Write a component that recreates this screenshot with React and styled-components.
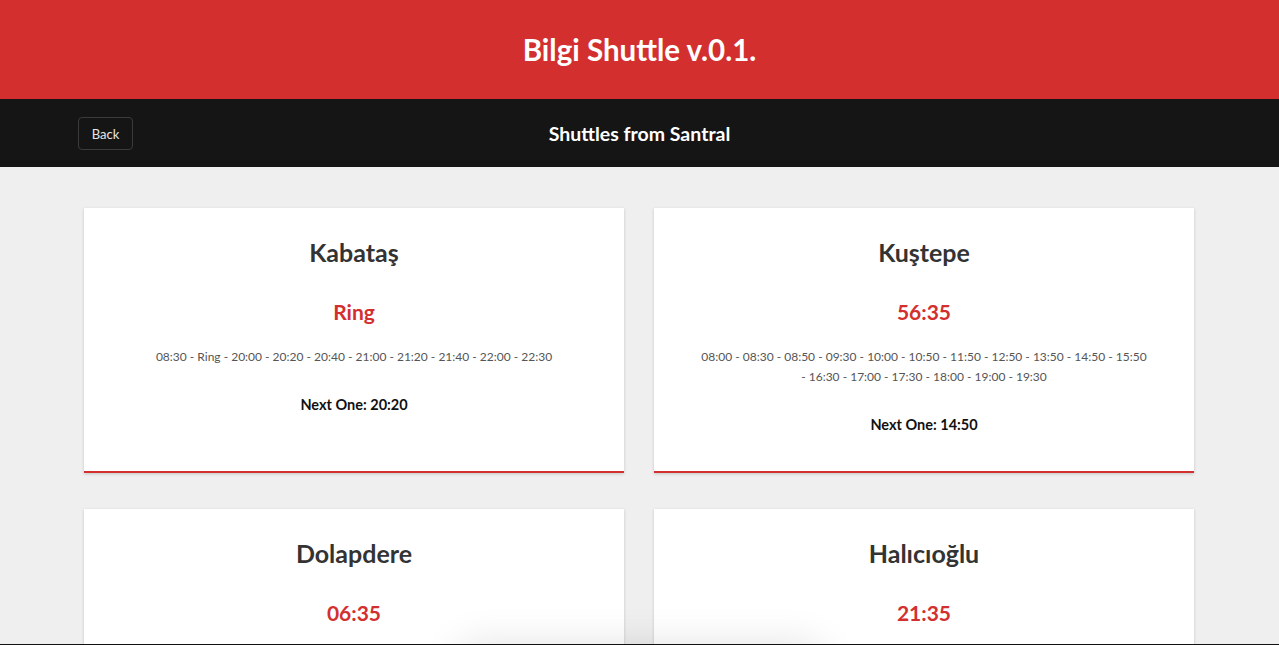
import React from 'react';
import styled, { createGlobalStyle } from 'styled-components';

const GlobalStyle = createGlobalStyle`
  html, body {
    margin: 0;
    padding: 0;
    background: #efefef;
    font-family: Lato, "Open Sans", sans-serif;
    overflow: hidden;
  }
`;

const Page = styled.div`
  min-height: 645px;
  background: #efefef;
`;

const Header = styled.header`
  height: 99px;
  background: #d32f2f;
  display: flex;
  align-items: center;
  justify-content: center;
  h1 {
    margin: 0;
    color: #ffffff;
    font-size: 29.5px;
    font-weight: 700;
  }
`;

const SubBar = styled.div`
  height: 68px;
  background: #151515;
  display: flex;
  align-items: center;
  justify-content: center;
  position: relative;
  .title {
    color: #ffffff;
    font-size: 19.5px;
    font-weight: 700;
  }
`;

const BackButton = styled.button`
  position: absolute;
  left: 78px;
  top: 18px;
  height: 33px;
  width: 55px;
  background: transparent;
  border: 1px solid #3b3b3b;
  border-radius: 4px;
  color: #e6e6e6;
  font-family: inherit;
  font-size: 13px;
  cursor: pointer;
`;

const Grid = styled.div`
  padding: 41px 85px 0 84px;
  display: grid;
  grid-template-columns: 1fr 1fr;
  column-gap: 30px;
  row-gap: 36px;
`;

const Card = styled.div`
  background: #ffffff;
  border-bottom: 2px solid #d32f2f;
  box-shadow: 0 1px 3px rgba(0, 0, 0, 0.18);
  padding: 27px 45px 30px;
  min-height: 206px;
  text-align: center;
  .stop {
    margin: 0;
    font-size: 25px;
    font-weight: 700;
    color: #333333;
    line-height: 34px;
  }
  .countdown {
    margin-top: 29px;
    font-size: 21px;
    font-weight: 700;
    color: #d32f2f;
    line-height: 28px;
  }
  .times {
    margin-top: 21px;
    font-size: 12px;
    color: #555555;
    line-height: 20px;
  }
  .next {
    margin-top: 29px;
    font-size: 14.5px;
    font-weight: 700;
    color: #111111;
  }
`;

const Toast = styled.div`
  position: fixed;
  left: 460px;
  bottom: -40px;
  width: 360px;
  height: 40px;
  box-shadow: 0 0 40px rgba(0, 0, 0, 0.12);
`;

const BottomLine = styled.div`
  position: fixed;
  left: 0;
  right: 0;
  bottom: 0;
  height: 1px;
  background: #111111;
`;

const routes = [
  {
    stop: 'Kabataş',
    countdown: 'Ring',
    times: '08:30 - Ring - 20:00 - 20:20 - 20:40 - 21:00 - 21:20 - 21:40 - 22:00 - 22:30',
    next: '20:20',
  },
  {
    stop: 'Kuştepe',
    countdown: '56:35',
    times:
      '08:00 - 08:30 - 08:50 - 09:30 - 10:00 - 10:50 - 11:50 - 12:50 - 13:50 - 14:50 - 15:50 - 16:30 - 17:00 - 17:30 - 18:00 - 19:00 - 19:30',
    next: '14:50',
  },
  {
    stop: 'Dolapdere',
    countdown: '06:35',
    times: '07:45 - 08:15 - 08:45 - 09:15 - 09:45 - 10:15 - 10:45',
    next: '12:00',
  },
  {
    stop: 'Halıcıoğlu',
    countdown: '21:35',
    times: '08:00 - 09:00 - 10:00 - 11:00 - 12:00 - 13:00',
    next: '15:00',
  },
];

const RouteCard = ({ stop, countdown, times, next }) => (
  <Card>
    <h2 className='stop'>{stop}</h2>
    <div className='countdown'>{countdown}</div>
    <div className='times'>{times}</div>
    <div className='next'>Next One: {next}</div>
  </Card>
);

export default function App() {
  return (
    <Page>
      <GlobalStyle />
      <Header>
        <h1>Bilgi Shuttle v.0.1.</h1>
      </Header>
      <SubBar>
        <BackButton>Back</BackButton>
        <span className='title'>Shuttles from Santral</span>
      </SubBar>
      <Grid>
        {routes.map((r) => (
          <RouteCard key={r.stop} {...r} />
        ))}
      </Grid>
      <Toast />
      <BottomLine />
    </Page>
  );
}
